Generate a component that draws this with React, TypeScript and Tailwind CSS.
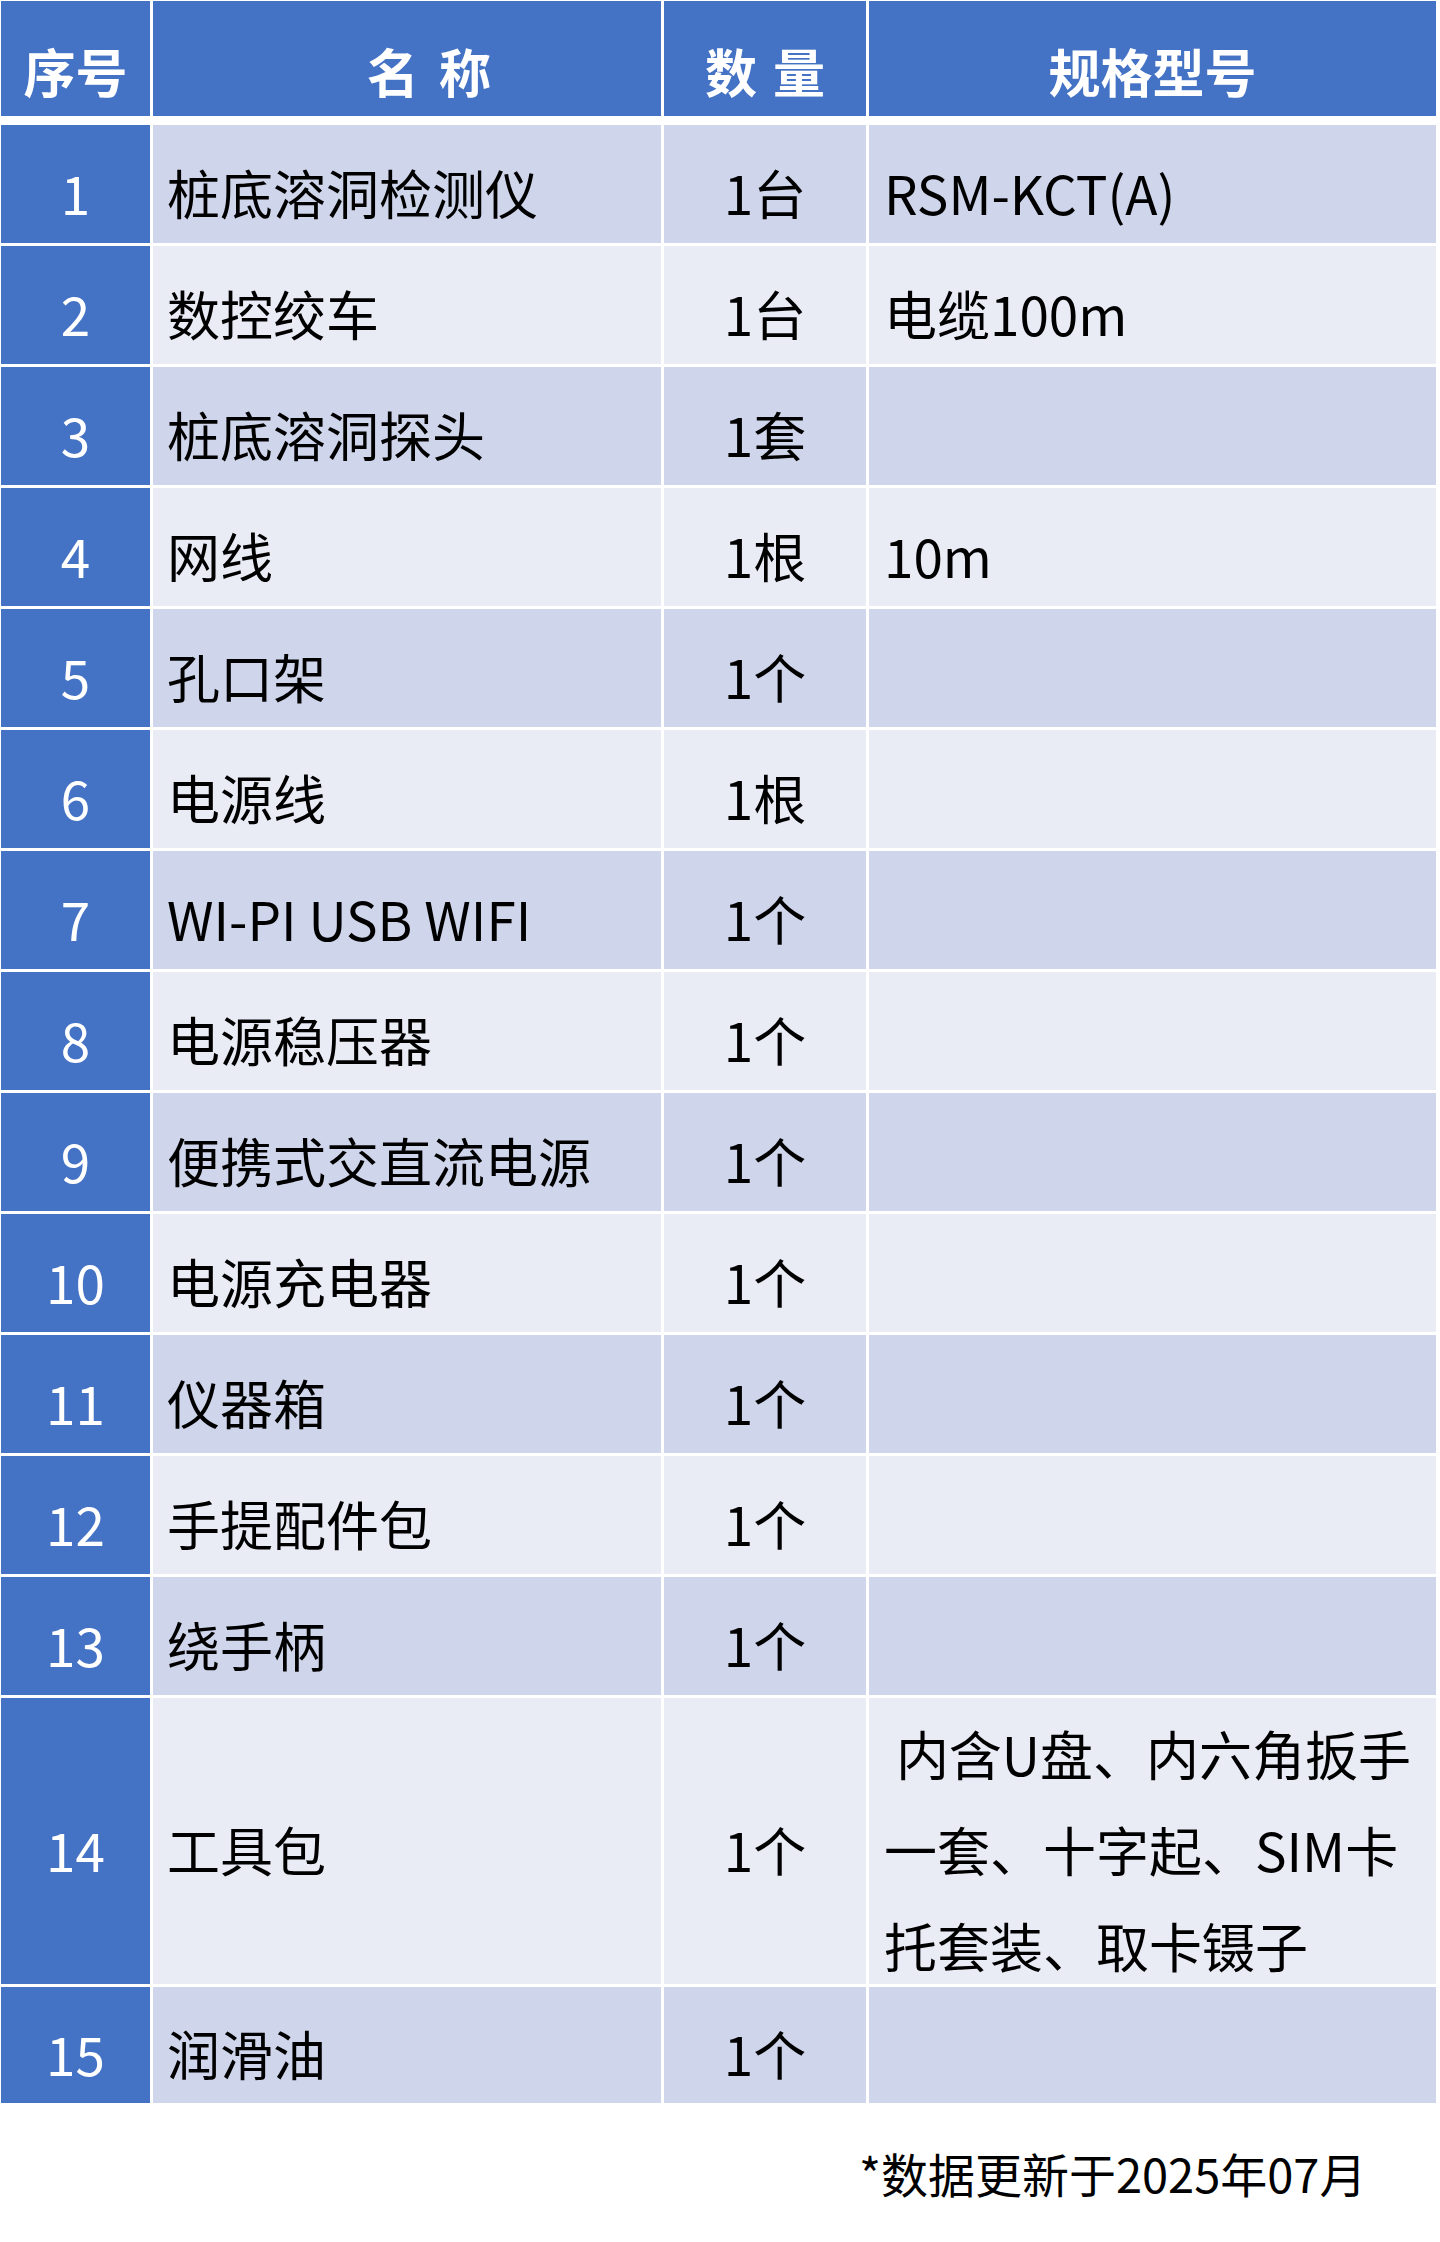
import React from "react";

// 装箱清单
const items: { name: string; qty: string; spec?: React.ReactNode }[] = [
  { name: "桩底溶洞检测仪", qty: "1台", spec: "RSM-KCT(A)" },
  { name: "数控绞车", qty: "1台", spec: "电缆100m" },
  { name: "桩底溶洞探头", qty: "1套" },
  { name: "网线", qty: "1根", spec: "10m" },
  { name: "孔口架", qty: "1个" },
  { name: "电源线", qty: "1根" },
  { name: "WI-PI USB WIFI", qty: "1个" },
  { name: "电源稳压器", qty: "1个" },
  { name: "便携式交直流电源", qty: "1个" },
  { name: "电源充电器", qty: "1个" },
  { name: "仪器箱", qty: "1个" },
  { name: "手提配件包", qty: "1个" },
  { name: "绕手柄", qty: "1个" },
  {
    name: "工具包",
    qty: "1个",
    spec: (
      <>
        {"\u00a0"}内含U盘、内六角扳手
        <br />
        一套、十字起、SIM卡
        <br />
        托套装、取卡镊子
      </>
    ),
  },
  { name: "润滑油", qty: "1个" },
];

const grid = "grid grid-cols-[149px_508px_202px_567px] grid-rows-1 gap-x-[3px]";

export default function App() {
  return (
    <div
      className="w-[1440px] h-[2242px] bg-white text-black"
      style={{ fontFamily: '"Noto Sans CJK SC", "Noto Sans", sans-serif' }}
    >
      <div className="pt-[1px] pl-[1px] flex flex-col">
        {/* Header */}
        <div className={`${grid} h-[115px] text-[52px] font-bold text-white leading-none`}>
          <div className="bg-[#4472c4] flex items-center justify-center pt-[24px]">序号</div>
          <div className="bg-[#4472c4] flex items-center justify-center pt-[24px] pl-[44px]">
            名<span className="inline-block w-[20px]" />称
          </div>
          <div className="bg-[#4472c4] flex items-center justify-center pt-[24px]">
            数<span className="inline-block w-[16px]" />量
          </div>
          <div className="bg-[#4472c4] flex items-center justify-center pt-[24px]">规格型号</div>
        </div>

        {/* Rows */}
        <div className="mt-[9px] flex flex-col gap-y-[3px] text-[53px] leading-none">
          {items.map((item, i) => {
            const bg = i % 2 === 0 ? "bg-[#cfd5ea]" : "bg-[#e9ebf5]";
            const h = i === 13 ? "h-[286px]" : i === 14 ? "h-[116px]" : "h-[118px]";
            return (
              <div key={i} className={`${grid} ${h}`}>
                <div className="bg-[#4472c4] text-white flex items-center justify-center pt-[16px] min-h-0">
                  {i + 1}
                </div>
                <div className={`${bg} flex items-center pl-[14px] pt-[16px] min-h-0`}>{item.name}</div>
                <div className={`${bg} flex items-center justify-center pt-[16px] min-h-0`}>{item.qty}</div>
                <div className={`${bg} flex items-center pl-[15px] pt-[16px] leading-[96px] min-h-0`}>
                  <div>{item.spec}</div>
                </div>
              </div>
            );
          })}
        </div>
      </div>

      {/* Footer */}
      <div className="mt-[40px] pl-[859px] text-[47px] leading-[60px]">*数据更新于2025年07月</div>
    </div>
  );
}
